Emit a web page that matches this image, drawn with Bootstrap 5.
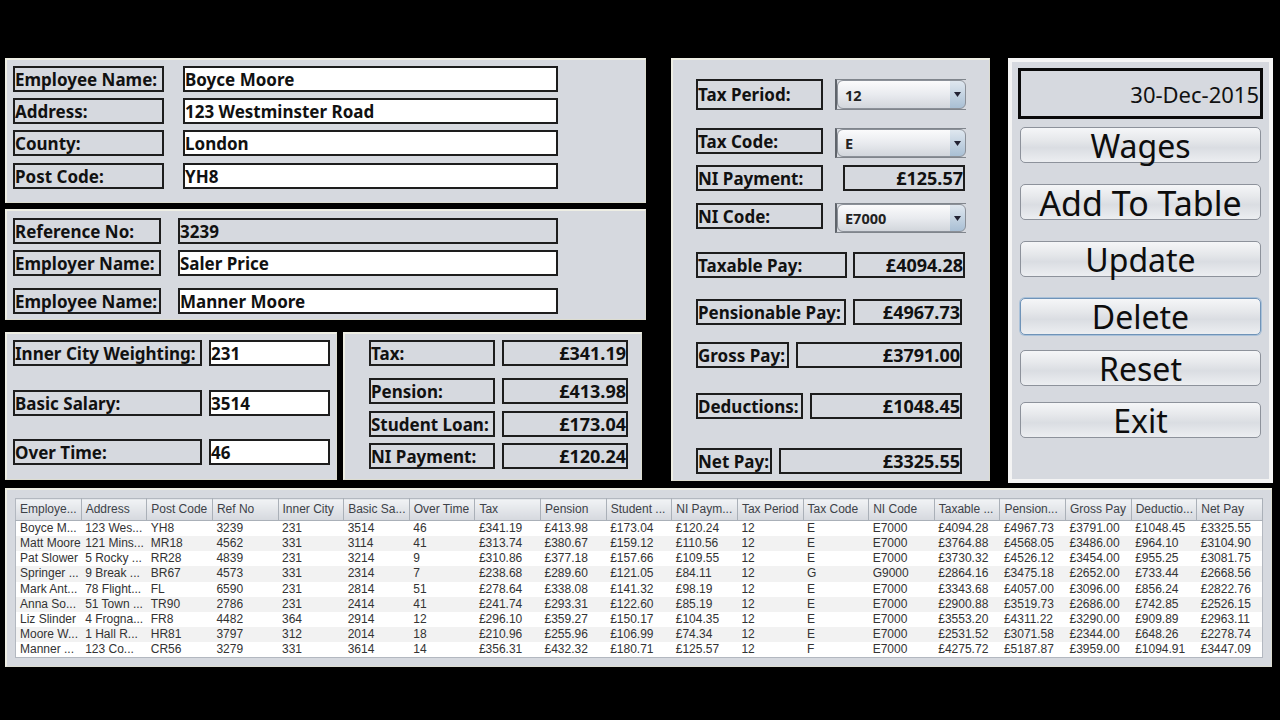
<!DOCTYPE html>
<html lang="en">
<head>
  <meta charset="UTF-8" />
  <title>Wages</title>
  <meta name="viewport" content="width=device-width, initial-scale=1" />
  <link href="https://cdn.jsdelivr.net/npm/bootstrap@5.3.0/dist/css/bootstrap.min.css" rel="stylesheet" />
  <style>
    html, body { height: 100%; }
    body {
      background: #000;
      margin: 0;
      overflow: hidden;
      font-family: "Noto Sans", "DejaVu Sans", sans-serif;
    }
    .screen { width: 1280px; height: 720px; padding: 58px 0 0 5px; }
    .top-area { height: 430px; }
    .left-col { width: 641px; margin-right: 25px; }

    .pane {
      background: #d6d9df;
      border: 1px solid #dcdcd0;
      border-top: 2px solid #eeeee4;
      border-left: 2px solid #eeeee4;
    }
    .pane-grid { display: grid; align-items: start; justify-content: start; }

    .pane-person { height: 145px; margin-bottom: 6px; padding: 6px 0 0 6px; grid-template-rows: 32px 32px 33px 26px; }
    .pane-person .fld-l { width: 151px; margin-right: 19px; }
    .pane-person .fld-v { width: 375px; }

    .pane-ref { height: 111px; margin-bottom: 12px; padding: 7px 0 0 6px; grid-template-rows: 32px 38px 26px; }
    .pane-ref .fld-l { width: 148px; margin-right: 17px; }
    .pane-ref .fld-v { width: 380px; }

    .pane-pay { width: 332px; height: 148px; margin-right: 6px; padding: 6px 0 0 6px; grid-template-rows: 50px 49px 26px; }
    .pane-pay .fld-l { width: 189px; margin-right: 7px; }
    .pane-pay .fld-v { width: 121px; }

    .pane-dedu { width: 299px; height: 148px; padding: 6px 0 0 24px; grid-template-rows: 38px 33px 32px 26px; }
    .pane-dedu .fld-l { width: 126px; margin-right: 7px; }
    .pane-dedu .fld-v { width: 126px; }

    .pane-tax {
      width: 319px; height: 423px; margin-right: 18px; padding: 19px 0 0 23px;
      grid-template-rows: 49px 37px 38px 49px 47px 43px 51px 55px 26px;
    }
    .pane-side {
      width: 265px; height: 425px; padding: 6px 0 0 6px;
      border: 4px solid #f4f4f4;
      grid-template-rows: 59px 57px 57px 57px 52px 52px 36px;
    }

    .row-line { display: flex; align-items: flex-start; }
    .fld {
      height: 26px;
      border: 2px solid #1d1d1d;
      padding: 1px 0 0;
      background: #d6d9df;
      color: #111;
      font-size: 17px;
      font-weight: 700;
      line-height: 21px;
      white-space: nowrap;
      overflow: hidden;
    }
    .fld-white { background: #fff; }
    .fld-money { padding-top: 0; text-align: right; font-size: 18px; line-height: 22px; }
    .w-lbl-125 { width: 127px; }
    .w-lbl-taxable { width: 151px; margin-right: 6px; }
    .w-lbl-pens { width: 150px; margin-right: 7px; }
    .w-lbl-gross { width: 93px; margin-right: 7px; }
    .w-lbl-ded { width: 107px; margin-right: 7px; }
    .w-lbl-net { width: 76px; margin-right: 7px; }
    .tall-l { height: 31px; line-height: 25px; }
    .w-val-ni { width: 122px; margin-left: 20px; }
    .w-val-taxable { width: 112px; }
    .w-val-pens { width: 109px; }
    .w-val-gross { width: 166px; }
    .w-val-ded { width: 152px; }
    .w-val-net { width: 183px; }

    .combo-wrap {
      width: 131px;
      height: 30px;
      margin-left: 12px;
      border-left: 2px solid #5f646b;
      border-top: 1px solid #80858c;
      border-bottom: 1px solid #80858c;
    }
    .combo-tall { height: 31px; }
    .combo {
      height: 100%;
      padding: 0 20px 0 7px;
      border: 1px solid #8b9098;
      border-radius: 6px;
      color: #222;
      font-size: 14.5px;
      font-weight: 700;
      line-height: 26px;
      box-shadow: none;
      appearance: none;
      background-color: #e4e7ec;
      background-image:
        url("data:image/svg+xml,%3Csvg xmlns='http://www.w3.org/2000/svg' width='7' height='5'%3E%3Cpath d='M0 0h7L3.500 5z' fill='%23223'/%3E%3C/svg%3E"),
        linear-gradient(#dfe7ef, #a9bfd4),
        linear-gradient(#fbfbfc, #e9ebef 50%, #d2d6dc);
      background-repeat: no-repeat;
      background-position: right 4px center, right 0 center, 0 0;
      background-size: 7px 5px, 15px 100%, 100% 100%;
    }
    .combo:focus { border-color: #8b9098; box-shadow: none; }

    .date-box {
      width: 245px;
      height: 51px;
      border: 3px solid #0a0a0a;
      padding: 0 1px 0 0;
      color: #111;
      font-size: 22px;
      line-height: 47px;
      text-align: right;
    }
    .side-btn {
      width: 241px;
      height: 36px;
      margin-left: 2px;
      padding: 1px 0 0;
      border: 1px solid #8d929b;
      border-radius: 5px;
      color: #0d0d0d;
      font-size: 32px;
      line-height: 34px;
      background: linear-gradient(#f5f6f8, #e6e8eb 35%, #dadde2 58%, #eceef1);
    }
    .side-btn-wide { font-size: 34px; }
    .side-btn-focus { height: 37px; border-color: #6f93b8; box-shadow: 0 0 0 1px #a9c1d9; }

    .pane-table { width: 1267px; height: 179px; padding: 8px 0 0 8px; }
    .wage-table {
      width: 1248px;
      margin: 0;
      table-layout: fixed;
      border: 1px solid #b3b8c0;
      border-collapse: collapse;
      font-family: "Liberation Sans", Arial, sans-serif;
      font-size: 12px;
      color: #333;
    }
    .wage-table th, .wage-table td {
      padding: 0 0 0 4px;
      border: 0;
      white-space: nowrap;
      overflow: hidden;
      font-weight: 400;
    }
    .wage-table th {
      height: 22px;
      padding-bottom: 2px;
      color: #3d4248;
      border-right: 1px solid #aab0b8;
      border-bottom: 1px solid #aab0b8;
      background: linear-gradient(#f1f3f5, #d5d8de);
    }
    .wage-table td { height: 15.2px; line-height: 15px; background: #fff; }
    .wage-table tbody tr:nth-child(even) td { background: #f2f2f2; }
  </style>
</head>
<body>
  <div class="screen">
    <div class="d-flex top-area">
      <div class="left-col">
        <div class="pane pane-grid pane-person">
          <div class="row-line"><div class="fld fld-l">Employee Name:</div><div class="fld fld-v fld-white">Boyce Moore</div></div>
          <div class="row-line"><div class="fld fld-l">Address:</div><div class="fld fld-v fld-white">123 Westminster Road</div></div>
          <div class="row-line"><div class="fld fld-l">County:</div><div class="fld fld-v fld-white">London</div></div>
          <div class="row-line"><div class="fld fld-l">Post Code:</div><div class="fld fld-v fld-white">YH8</div></div>
        </div>
        <div class="pane pane-grid pane-ref">
          <div class="row-line"><div class="fld fld-l">Reference No:</div><div class="fld fld-v">3239</div></div>
          <div class="row-line"><div class="fld fld-l">Employer Name:</div><div class="fld fld-v fld-white">Saler Price</div></div>
          <div class="row-line"><div class="fld fld-l">Employee Name:</div><div class="fld fld-v fld-white">Manner Moore</div></div>
        </div>
        <div class="d-flex">
          <div class="pane pane-grid pane-pay">
            <div class="row-line"><div class="fld fld-l">Inner City Weighting:</div><div class="fld fld-v fld-white">231</div></div>
            <div class="row-line"><div class="fld fld-l">Basic Salary:</div><div class="fld fld-v fld-white">3514</div></div>
            <div class="row-line"><div class="fld fld-l">Over Time:</div><div class="fld fld-v fld-white">46</div></div>
          </div>
          <div class="pane pane-grid pane-dedu">
            <div class="row-line"><div class="fld fld-l">Tax:</div><div class="fld fld-v fld-money">£341.19</div></div>
            <div class="row-line"><div class="fld fld-l">Pension:</div><div class="fld fld-v fld-money">£413.98</div></div>
            <div class="row-line"><div class="fld fld-l">Student Loan:</div><div class="fld fld-v fld-money">£173.04</div></div>
            <div class="row-line"><div class="fld fld-l">NI Payment:</div><div class="fld fld-v fld-money">£120.24</div></div>
          </div>
        </div>
      </div>

      <div class="pane pane-grid pane-tax">
        <div class="row-line"><div class="fld w-lbl-125 tall-l">Tax Period:</div><div class="combo-wrap combo-tall"><select class="form-select combo" aria-label="Tax Period"><option>12</option></select></div></div>
        <div class="row-line"><div class="fld w-lbl-125">Tax Code:</div><div class="combo-wrap"><select class="form-select combo" aria-label="Tax Code"><option>E</option></select></div></div>
        <div class="row-line"><div class="fld w-lbl-125">NI Payment:</div><div class="fld fld-money w-val-ni">£125.57</div></div>
        <div class="row-line"><div class="fld w-lbl-125">NI Code:</div><div class="combo-wrap"><select class="form-select combo" aria-label="NI Code"><option>E7000</option></select></div></div>
        <div class="row-line"><div class="fld w-lbl-taxable">Taxable Pay:</div><div class="fld fld-money w-val-taxable">£4094.28</div></div>
        <div class="row-line"><div class="fld w-lbl-pens">Pensionable Pay:</div><div class="fld fld-money w-val-pens">£4967.73</div></div>
        <div class="row-line"><div class="fld w-lbl-gross">Gross Pay:</div><div class="fld fld-money w-val-gross">£3791.00</div></div>
        <div class="row-line"><div class="fld w-lbl-ded">Deductions:</div><div class="fld fld-money w-val-ded">£1048.45</div></div>
        <div class="row-line"><div class="fld w-lbl-net">Net Pay:</div><div class="fld fld-money w-val-net">£3325.55</div></div>
      </div>

      <div class="pane pane-grid pane-side">
        <div class="date-box">30-Dec-2015</div>
        <button type="button" class="btn side-btn">Wages</button>
        <button type="button" class="btn side-btn side-btn-wide">Add To Table</button>
        <button type="button" class="btn side-btn">Update</button>
        <button type="button" class="btn side-btn side-btn-focus">Delete</button>
        <button type="button" class="btn side-btn">Reset</button>
        <button type="button" class="btn side-btn">Exit</button>
      </div>
    </div>

    <div class="pane pane-table">
      <table class="table wage-table">
        <thead>
          <tr><th>Employe...</th><th>Address</th><th>Post Code</th><th>Ref No</th><th>Inner City</th><th>Basic Sa...</th><th>Over Time</th><th>Tax</th><th>Pension</th><th>Student ...</th><th>NI Paym...</th><th>Tax Period</th><th>Tax Code</th><th>NI Code</th><th>Taxable ...</th><th>Pension...</th><th>Gross Pay</th><th>Deductio...</th><th>Net Pay</th></tr>
        </thead>
        <tbody>
          <tr><td>Boyce M...</td><td>123 Wes...</td><td>YH8</td><td>3239</td><td>231</td><td>3514</td><td>46</td><td>£341.19</td><td>£413.98</td><td>£173.04</td><td>£120.24</td><td>12</td><td>E</td><td>E7000</td><td>£4094.28</td><td>£4967.73</td><td>£3791.00</td><td>£1048.45</td><td>£3325.55</td></tr>
          <tr><td>Matt Moore</td><td>121 Mins...</td><td>MR18</td><td>4562</td><td>331</td><td>3114</td><td>41</td><td>£313.74</td><td>£380.67</td><td>£159.12</td><td>£110.56</td><td>12</td><td>E</td><td>E7000</td><td>£3764.88</td><td>£4568.05</td><td>£3486.00</td><td>£964.10</td><td>£3104.90</td></tr>
          <tr><td>Pat Slower</td><td>5 Rocky ...</td><td>RR28</td><td>4839</td><td>231</td><td>3214</td><td>9</td><td>£310.86</td><td>£377.18</td><td>£157.66</td><td>£109.55</td><td>12</td><td>E</td><td>E7000</td><td>£3730.32</td><td>£4526.12</td><td>£3454.00</td><td>£955.25</td><td>£3081.75</td></tr>
          <tr><td>Springer ...</td><td>9 Break ...</td><td>BR67</td><td>4573</td><td>331</td><td>2314</td><td>7</td><td>£238.68</td><td>£289.60</td><td>£121.05</td><td>£84.11</td><td>12</td><td>G</td><td>G9000</td><td>£2864.16</td><td>£3475.18</td><td>£2652.00</td><td>£733.44</td><td>£2668.56</td></tr>
          <tr><td>Mark Ant...</td><td>78 Flight...</td><td>FL</td><td>6590</td><td>231</td><td>2814</td><td>51</td><td>£278.64</td><td>£338.08</td><td>£141.32</td><td>£98.19</td><td>12</td><td>E</td><td>E7000</td><td>£3343.68</td><td>£4057.00</td><td>£3096.00</td><td>£856.24</td><td>£2822.76</td></tr>
          <tr><td>Anna So...</td><td>51 Town ...</td><td>TR90</td><td>2786</td><td>231</td><td>2414</td><td>41</td><td>£241.74</td><td>£293.31</td><td>£122.60</td><td>£85.19</td><td>12</td><td>E</td><td>E7000</td><td>£2900.88</td><td>£3519.73</td><td>£2686.00</td><td>£742.85</td><td>£2526.15</td></tr>
          <tr><td>Liz Slinder</td><td>4 Frogna...</td><td>FR8</td><td>4482</td><td>364</td><td>2914</td><td>12</td><td>£296.10</td><td>£359.27</td><td>£150.17</td><td>£104.35</td><td>12</td><td>E</td><td>E7000</td><td>£3553.20</td><td>£4311.22</td><td>£3290.00</td><td>£909.89</td><td>£2963.11</td></tr>
          <tr><td>Moore W...</td><td>1 Hall R...</td><td>HR81</td><td>3797</td><td>312</td><td>2014</td><td>18</td><td>£210.96</td><td>£255.96</td><td>£106.99</td><td>£74.34</td><td>12</td><td>E</td><td>E7000</td><td>£2531.52</td><td>£3071.58</td><td>£2344.00</td><td>£648.26</td><td>£2278.74</td></tr>
          <tr><td>Manner ...</td><td>123 Co...</td><td>CR56</td><td>3279</td><td>331</td><td>3614</td><td>14</td><td>£356.31</td><td>£432.32</td><td>£180.71</td><td>£125.57</td><td>12</td><td>F</td><td>E7000</td><td>£4275.72</td><td>£5187.87</td><td>£3959.00</td><td>£1094.91</td><td>£3447.09</td></tr>
        </tbody>
      </table>
    </div>
  </div>
  <script src="https://cdn.jsdelivr.net/npm/bootstrap@5.3.0/dist/js/bootstrap.bundle.min.js"></script>
</body>
</html>
